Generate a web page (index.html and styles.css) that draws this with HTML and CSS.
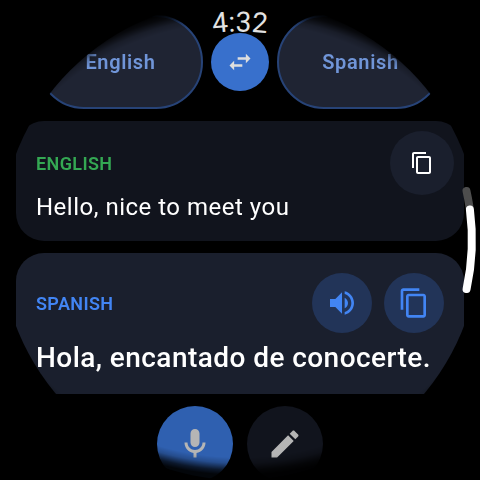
FILE: index.html
```html
<!DOCTYPE html>
<html lang="en">
<head>
<meta charset="utf-8">
<title>Translate</title>
<link rel="stylesheet" href="styles.css">
</head>
<body>
<main class="watch">
  <div class="face">
    <div class="content">
      <div class="languages">
        <button class="pill">English</button>
        <button class="swap" aria-label="Swap languages">
          <svg width="28" height="28" viewBox="0 0 24 24"><path d="M6.99 11L3 15l3.99 4v-3H14v-2H6.99v-3zM21 9l-3.99-4v3H10v2h7.01v3L21 9z"/></svg>
        </button>
        <button class="pill">Spanish</button>
      </div>
      <section class="card source">
        <div class="card-head">
          <h2 class="label">ENGLISH</h2>
          <button class="round large" aria-label="Copy">
            <svg width="24" height="24" viewBox="0 0 24 24"><path d="M16 1H4c-1.1 0-2 .9-2 2v14h2V3h12V1zm3 4H8c-1.1 0-2 .9-2 2v14c0 1.1.9 2 2 2h11c1.1 0 2-.9 2-2V7c0-1.1-.9-2-2-2zm0 16H8V7h11v14z"/></svg>
          </button>
        </div>
        <p class="phrase">Hello, nice to meet you</p>
      </section>
      <section class="card target">
        <div class="card-head">
          <h2 class="label">SPANISH</h2>
          <button class="round" aria-label="Listen">
            <svg width="32" height="32" viewBox="0 0 24 24"><path d="M3 9v6h4l5 5V4L7 9H3zm13.500 3c0-1.770-1.020-3.290-2.500-4.030v8.050c1.480-.730 2.500-2.250 2.500-4.020zM14 3.230v2.060c2.890.860 5 3.540 5 6.710s-2.110 5.850-5 6.710v2.060c4.010-.910 7-4.490 7-8.770s-2.990-7.860-7-8.770z"/></svg>
          </button>
          <button class="round" aria-label="Copy translation">
            <svg width="32" height="32" viewBox="0 0 24 24"><path d="M16 1H4c-1.1 0-2 .9-2 2v14h2V3h12V1zm3 4H8c-1.1 0-2 .9-2 2v14c0 1.1.9 2 2 2h11c1.1 0 2-.9 2-2V7c0-1.1-.9-2-2-2zm0 16H8V7h11v14z"/></svg>
          </button>
        </div>
        <p class="phrase">Hola, encantado de conocerte.</p>
      </section>
      <div class="actions">
        <button class="action speak" aria-label="Speak">
          <svg width="36" height="36" viewBox="0 0 24 24"><path d="M12 14c1.660 0 3-1.340 3-3V5c0-1.660-1.340-3-3-3S9 3.340 9 5v6c0 1.660 1.340 3 3 3zm5-3c0 2.760-2.240 5-5 5s-5-2.240-5-5H5c0 3.530 2.610 6.430 6 6.920V21h2v-3.080c3.390-.490 6-3.390 6-6.920h-2z"/></svg>
        </button>
        <button class="action" aria-label="Type">
          <svg width="36" height="36" viewBox="0 0 24 24"><path d="M3 17.250V21h3.750L17.810 9.940l-3.750-3.750L3 17.250zM20.710 7.040c.390-.390.390-1.020 0-1.410l-2.340-2.340c-.390-.390-1.020-.390-1.410 0l-1.830 1.830 3.750 3.750 1.830-1.830z"/></svg>
        </button>
      </div>
    </div>
  </div>
  <svg class="overlay" width="480" height="480" viewBox="0 0 480 480">
    <path id="clock-arc" d="M31.500 240A208.500 208.500 0 0 1 448.500 240" fill="none"/>
    <text class="clock"><textPath href="#clock-arc" startOffset="50%" text-anchor="middle">4:32</textPath></text>
    <path class="track" d="M466.500 191A231.700 231.700 0 0 1 469.500 207"/>
    <path class="thumb" d="M469.900 209.500A231.900 231.900 0 0 1 466.600 289"/>
  </svg>
</main>
</body>
</html>
```
FILE: styles.css
```css
* {
  box-sizing: border-box;
}

body {
  margin: 0;
  background: #000;
  font-family: Roboto, "Liberation Sans", sans-serif;
}

button {
  display: flex;
  align-items: center;
  justify-content: center;
  flex: none;
  margin: 0;
  padding: 0;
  border: 0;
  font-family: inherit;
}

svg {
  display: block;
  fill: currentColor;
}

.watch {
  position: relative;
  width: 480px;
  height: 480px;
  overflow: hidden;
}

.face {
  height: 480px;
  clip-path: circle(240px at 240px 240px);
}

.content {
  height: 480px;
  overflow: hidden;
  padding: 15px 16px 0;
  -webkit-mask-image: radial-gradient(ellipse 272px 235px at center, #000 92.5%, rgba(0, 0, 0, 0.8) 95%, rgba(0, 0, 0, 0.25) 98%, rgba(0, 0, 0, 0.06) 100%);
  mask-image: radial-gradient(ellipse 272px 235px at center, #000 92.5%, rgba(0, 0, 0, 0.8) 95%, rgba(0, 0, 0, 0.25) 98%, rgba(0, 0, 0, 0.06) 100%);
}

.languages {
  display: flex;
  align-items: center;
  justify-content: center;
  gap: 8px;
  height: 94px;
  margin-bottom: 12px;
}

.pill {
  width: 166px;
  height: 94px;
  border: 2px solid #274377;
  border-radius: 47px;
  background: #1f2433;
  color: #7095d8;
  font-size: 20px;
  font-weight: 600;
  letter-spacing: 0.65px;
  padding-left: 1px;
}

.swap {
  width: 58px;
  height: 58px;
  border-radius: 50%;
  background: #3870cc;
  color: #dedede;
}

.card {
  border-radius: 28px;
  padding: 10px 10px 0 20px;
  background: #11141d;
  color: #fff;
}

.source {
  height: 120px;
}

.target {
  height: 141px;
  margin-top: 12px;
  padding: 20px 20px 0;
  background: #1a1f2d;
}

.card-head {
  display: flex;
  align-items: center;
  gap: 12px;
}

.label {
  flex: 1;
  margin: 0;
  padding-top: 2px;
  color: #34a853;
  font-size: 18px;
  font-weight: 600;
  line-height: 24px;
  letter-spacing: 0.38px;
}

.target .label {
  color: #4285f4;
}

.round {
  width: 60px;
  height: 60px;
  border-radius: 50%;
  background: #223458;
  color: #4285f4;
}

.large {
  width: 64px;
  height: 64px;
  background: #1a1f2d;
  color: #fff;
}

.phrase {
  margin: -4px 0 0;
  font-size: 24px;
  line-height: 32px;
  letter-spacing: 0.5px;
  white-space: nowrap;
}

.target .phrase {
  margin-top: 7px;
  font-size: 28px;
  font-weight: 500;
  line-height: 36px;
  letter-spacing: 0.44px;
}

.actions {
  display: flex;
  justify-content: center;
  gap: 14px;
  margin-top: 12px;
}

.action {
  width: 76px;
  height: 76px;
  border-radius: 50%;
  background: #11141d;
  color: #b5b5b5;
}

.speak {
  background: #2f60b0;
}

.overlay {
  position: absolute;
  inset: 0;
}

.clock {
  fill: #e2e2e2;
  font-size: 28px;
  font-weight: 450;
}

.track,
.thumb {
  fill: none;
  stroke: #4d4d4d;
  stroke-width: 8px;
  stroke-linecap: round;
}

.thumb {
  stroke: #fff;
}
```
